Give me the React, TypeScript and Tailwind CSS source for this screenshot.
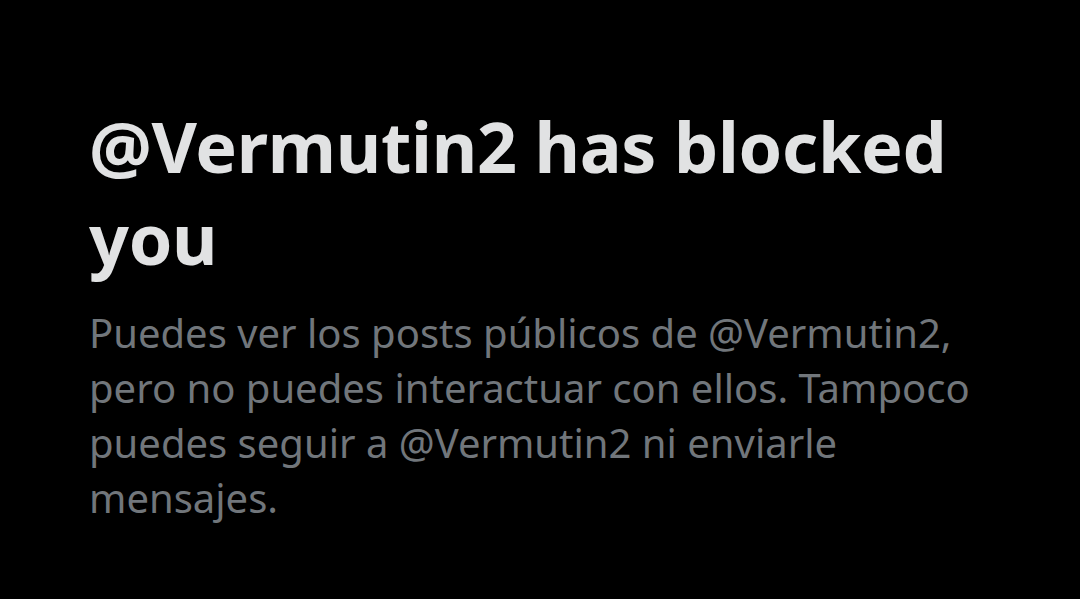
export default function App() {
  return (
    <div className="w-[1080px] h-[599px] bg-black overflow-hidden pl-[89px] pr-[60px] pt-[100px]" style={{ fontFamily: '"Noto Sans", "Open Sans", sans-serif' }}>
      <h1 className="text-[#e1e2e3] font-bold text-[70px] leading-[92px] tracking-[-0.3px]">
        @Vermutin2 has blocked you
      </h1>
      <p className="mt-[21px] text-[#71767b] text-[40px] leading-[55px] max-w-[900px]">
        Puedes ver los posts públicos de @Vermutin2, pero no puedes interactuar con ellos. Tampoco puedes seguir a @Vermutin2 ni enviarle mensajes.
      </p>
    </div>
  );
}
